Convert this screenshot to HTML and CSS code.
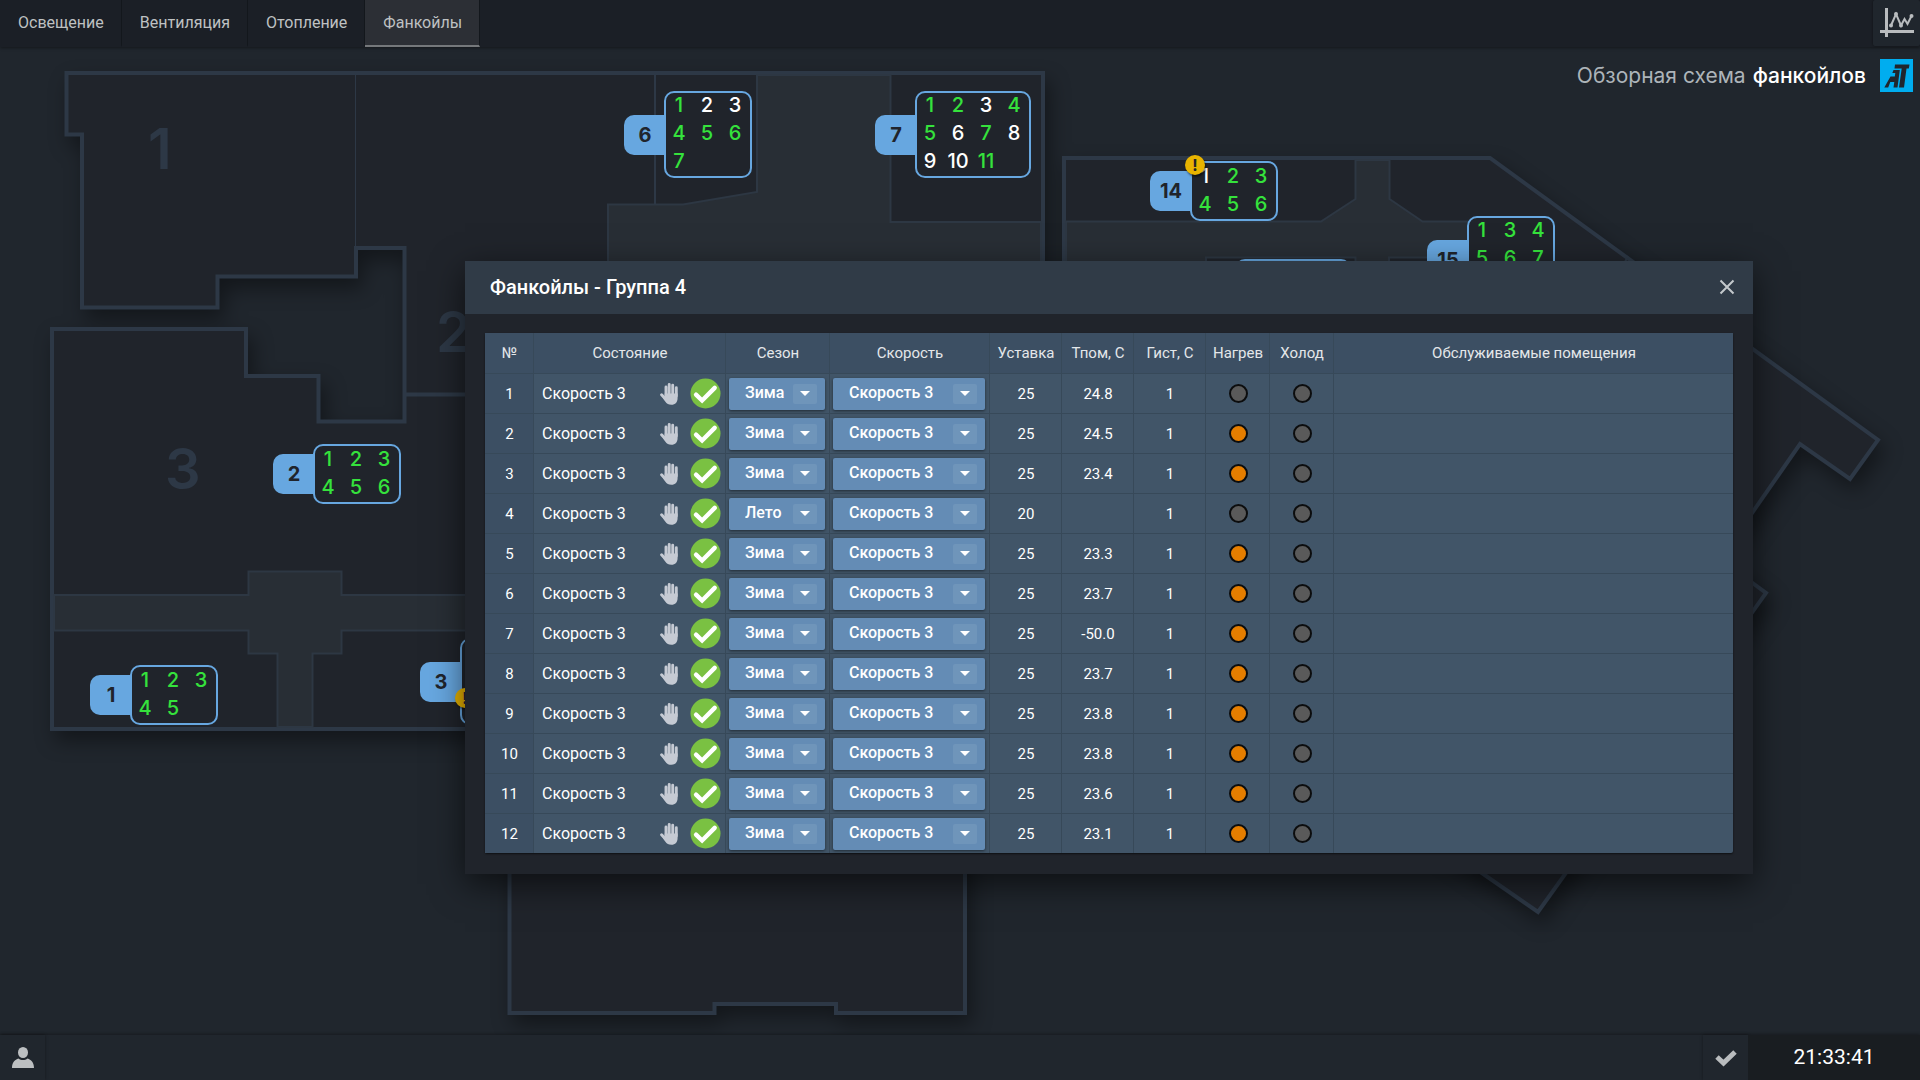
FILE: index.html
```html
<!DOCTYPE html>
<html lang="ru">
<head>
<meta charset="utf-8">
<title>Обзорная схема фанкойлов</title>
<link rel="stylesheet" href="styles.css">
</head>
<body>
<svg class="sprite" aria-hidden="true">
  <symbol id="hand" viewBox="0 0 18 22">
    <g fill="none" stroke="currentColor" stroke-linecap="round" stroke-width="2.9">
      <path d="M6 4V12M9.2 1.500V12M12.700 2.300V12M16.300 4.800V13M1.600 11.800L5.500 16"/>
    </g>
    <path fill="currentColor" d="M4.700 10.500h12.900v4.500c0 4-2.200 6.800-6.200 6.800-2.800 0-4.700-1-6.200-3.300L2.500 14.400l2.200-.7z"/>
  </symbol>
  <symbol id="ok" viewBox="0 0 32 32">
    <circle cx="16" cy="16" r="15.500" fill="#7ac142"/>
    <path d="M6.200 17.200l6.300 6 13-13" fill="none" stroke="#fff" stroke-width="4.500" stroke-linecap="round"/>
  </symbol>
</svg>

<header class="topbar">
  <nav class="tabs">
    <a class="tab" href="#light">Освещение</a>
    <a class="tab" href="#vent">Вентиляция</a>
    <a class="tab" href="#heat">Отопление</a>
    <a class="tab active" href="#fancoil">Фанкойлы</a>
  </nav>
  <button class="chart-btn" type="button" aria-label="Графики">
    <svg width="34" height="32" viewBox="0 0 34 32" fill="none" stroke="#b9bcbe">
      <path d="M6.500 1v29M0 24.500h34" stroke-width="3"/>
      <path d="M11 18.500l5-11.500 5 11.500 3.500-6.500 3 5 4-8" stroke-width="2"/>
      <g fill="#b9bcbe" stroke="none"><circle cx="11" cy="18.500" r="2"/><circle cx="16" cy="7" r="2"/><circle cx="21" cy="18.500" r="2"/><circle cx="31.500" cy="9" r="2"/></g>
    </svg>
  </button>
</header>

<main class="stage">
  <svg class="plan" width="1920" height="988" viewBox="0 47 1920 988" aria-hidden="true">
    <g class="walls">
      <path d="M66.500 73H1043V460H965V1013H836V1004H714.500V1013H509.500V729H52V329H246V376H318.500V421.500H404.500V248H356V276.500H217.500V307.500H82V134.500H66.500Z"/>
      <path d="M1064 158H1490L1878 440 1850 479 1800 444 1720 559 1766 593 1538 912 1300 747H1064Z"/>
    </g>
    <g class="halls">
      <path d="M608 460V204.500H683L757 192V75H890.500V222H1041V460Z"/>
      <path d="M54 595H248.500V571.500H341.500V595H600V630.500H341.500V653.500H312.500V727H277.500V653.500H248.500V630.500H54Z"/>
      <path d="M1066 221.500H1321L1355.500 199V160H1389.500V199L1422.500 221.500H1500V257.500H1389V600H1355.500V257.500H1206V600H1066Z"/>
    </g>
    <path class="thin" d="M355.500 75V248"/>
    <path class="mid" d="M655 75V204M1624 264L1628 256"/>
    <path class="wide" d="M404 394.500H480"/>
    <g class="zones">
      <text x="148" y="169">1</text>
      <text x="436" y="352">2</text>
      <text x="165" y="489">3</text>
    </g>
  </svg>

  <h1 class="title">Обзорная схема <b>фанкойлов</b>
    <svg width="33" height="33" viewBox="0 0 33 33" aria-hidden="true">
      <path fill="#00adef" d="M0 0h33v33H0z"/>
      <path fill="#20262d" d="M15 5.500h14.500l-.7 4H26.500L24 28.500h-5L21.700 9.500H14.500z"/>
      <path fill="#20262d" d="M13.500 11h6.300L17.500 28.500h-4l.8-5.500h-4L8.200 28.500H4.300L10.500 17.500h4.300l.5-3.500h-3z"/>
    </svg>
  </h1>

  <section class="marker m6"><span class="tag">6</span><span class="box"><i>1</i><i class="off">2</i><i class="off">3</i><i>4</i><i>5</i><i>6</i><i>7</i></span></section>
  <section class="marker m7"><span class="tag">7</span><span class="box four"><i>1</i><i>2</i><i class="off">3</i><i>4</i><i>5</i><i class="off">6</i><i>7</i><i class="off">8</i><i class="off">9</i><i class="off">10</i><i>11</i></span></section>
  <section class="marker m14"><span class="tag">14</span><span class="box short"><i class="off">1</i><i>2</i><i>3</i><i>4</i><i>5</i><i>6</i></span><span class="alert">!</span></section>
  <section class="marker m15"><span class="tag">15</span><span class="box tall"><i>1</i><i>3</i><i>4</i><i>5</i><i>6</i><i>7</i></span></section>
  <section class="marker m16"><span class="tag"></span><span class="box four tall"></span></section>
  <section class="marker m2"><span class="tag">2</span><span class="box short"><i>1</i><i>2</i><i>3</i><i>4</i><i>5</i><i>6</i></span></section>
  <section class="marker m1"><span class="tag">1</span><span class="box short"><i>1</i><i>2</i><i>3</i><i>4</i><i>5</i></span></section>
  <section class="marker m3"><span class="tag">3</span><span class="box tall"></span><span class="alert low">!</span></section>

  <section class="dialog" role="dialog" aria-labelledby="dlg-title">
    <header class="dialog-head">
      <h2 id="dlg-title">Фанкойлы - Группа 4</h2>
      <button class="close" type="button" aria-label="Закрыть">
        <svg width="16" height="16" viewBox="0 0 16 16" fill="none" stroke="#c3c8cc" stroke-width="2"><path d="M1.500 1.500l13 13M14.500 1.500l-13 13"/></svg>
      </button>
    </header>
    <div class="dialog-body">
      <table class="units">
        <colgroup><col class="c-num"><col class="c-state"><col class="c-season"><col class="c-speed"><col class="c-val"><col class="c-val"><col class="c-val"><col class="c-led"><col class="c-led"><col></colgroup>
        <thead>
          <tr><th>№</th><th>Состояние</th><th>Сезон</th><th>Скорость</th><th>Уставка</th><th>Тпом, С</th><th>Гист, С</th><th>Нагрев</th><th>Холод</th><th>Обслуживаемые помещения</th></tr>
        </thead>
        <tbody>
          <tr><td>1</td><td><div class="state"><span>Скорость 3</span><svg class="hand"><use href="#hand"/></svg><svg class="ok"><use href="#ok"/></svg></div></td><td><label class="pick"><select aria-label="Сезон 1"><option>Зима</option></select></label></td><td><label class="pick"><select aria-label="Скорость 1"><option>Скорость 3</option></select></label></td><td>25</td><td>24.8</td><td>1</td><td><span class="led"></span></td><td><span class="led"></span></td><td></td></tr>
          <tr><td>2</td><td><div class="state"><span>Скорость 3</span><svg class="hand"><use href="#hand"/></svg><svg class="ok"><use href="#ok"/></svg></div></td><td><label class="pick"><select aria-label="Сезон 2"><option>Зима</option></select></label></td><td><label class="pick"><select aria-label="Скорость 2"><option>Скорость 3</option></select></label></td><td>25</td><td>24.5</td><td>1</td><td><span class="led on"></span></td><td><span class="led"></span></td><td></td></tr>
          <tr><td>3</td><td><div class="state"><span>Скорость 3</span><svg class="hand"><use href="#hand"/></svg><svg class="ok"><use href="#ok"/></svg></div></td><td><label class="pick"><select aria-label="Сезон 3"><option>Зима</option></select></label></td><td><label class="pick"><select aria-label="Скорость 3"><option>Скорость 3</option></select></label></td><td>25</td><td>23.4</td><td>1</td><td><span class="led on"></span></td><td><span class="led"></span></td><td></td></tr>
          <tr><td>4</td><td><div class="state"><span>Скорость 3</span><svg class="hand"><use href="#hand"/></svg><svg class="ok"><use href="#ok"/></svg></div></td><td><label class="pick"><select aria-label="Сезон 4"><option>Лето</option></select></label></td><td><label class="pick"><select aria-label="Скорость 4"><option>Скорость 3</option></select></label></td><td>20</td><td></td><td>1</td><td><span class="led"></span></td><td><span class="led"></span></td><td></td></tr>
          <tr><td>5</td><td><div class="state"><span>Скорость 3</span><svg class="hand"><use href="#hand"/></svg><svg class="ok"><use href="#ok"/></svg></div></td><td><label class="pick"><select aria-label="Сезон 5"><option>Зима</option></select></label></td><td><label class="pick"><select aria-label="Скорость 5"><option>Скорость 3</option></select></label></td><td>25</td><td>23.3</td><td>1</td><td><span class="led on"></span></td><td><span class="led"></span></td><td></td></tr>
          <tr><td>6</td><td><div class="state"><span>Скорость 3</span><svg class="hand"><use href="#hand"/></svg><svg class="ok"><use href="#ok"/></svg></div></td><td><label class="pick"><select aria-label="Сезон 6"><option>Зима</option></select></label></td><td><label class="pick"><select aria-label="Скорость 6"><option>Скорость 3</option></select></label></td><td>25</td><td>23.7</td><td>1</td><td><span class="led on"></span></td><td><span class="led"></span></td><td></td></tr>
          <tr><td>7</td><td><div class="state"><span>Скорость 3</span><svg class="hand"><use href="#hand"/></svg><svg class="ok"><use href="#ok"/></svg></div></td><td><label class="pick"><select aria-label="Сезон 7"><option>Зима</option></select></label></td><td><label class="pick"><select aria-label="Скорость 7"><option>Скорость 3</option></select></label></td><td>25</td><td>-50.0</td><td>1</td><td><span class="led on"></span></td><td><span class="led"></span></td><td></td></tr>
          <tr><td>8</td><td><div class="state"><span>Скорость 3</span><svg class="hand"><use href="#hand"/></svg><svg class="ok"><use href="#ok"/></svg></div></td><td><label class="pick"><select aria-label="Сезон 8"><option>Зима</option></select></label></td><td><label class="pick"><select aria-label="Скорость 8"><option>Скорость 3</option></select></label></td><td>25</td><td>23.7</td><td>1</td><td><span class="led on"></span></td><td><span class="led"></span></td><td></td></tr>
          <tr><td>9</td><td><div class="state"><span>Скорость 3</span><svg class="hand"><use href="#hand"/></svg><svg class="ok"><use href="#ok"/></svg></div></td><td><label class="pick"><select aria-label="Сезон 9"><option>Зима</option></select></label></td><td><label class="pick"><select aria-label="Скорость 9"><option>Скорость 3</option></select></label></td><td>25</td><td>23.8</td><td>1</td><td><span class="led on"></span></td><td><span class="led"></span></td><td></td></tr>
          <tr><td>10</td><td><div class="state"><span>Скорость 3</span><svg class="hand"><use href="#hand"/></svg><svg class="ok"><use href="#ok"/></svg></div></td><td><label class="pick"><select aria-label="Сезон 10"><option>Зима</option></select></label></td><td><label class="pick"><select aria-label="Скорость 10"><option>Скорость 3</option></select></label></td><td>25</td><td>23.8</td><td>1</td><td><span class="led on"></span></td><td><span class="led"></span></td><td></td></tr>
          <tr><td>11</td><td><div class="state"><span>Скорость 3</span><svg class="hand"><use href="#hand"/></svg><svg class="ok"><use href="#ok"/></svg></div></td><td><label class="pick"><select aria-label="Сезон 11"><option>Зима</option></select></label></td><td><label class="pick"><select aria-label="Скорость 11"><option>Скорость 3</option></select></label></td><td>25</td><td>23.6</td><td>1</td><td><span class="led on"></span></td><td><span class="led"></span></td><td></td></tr>
          <tr><td>12</td><td><div class="state"><span>Скорость 3</span><svg class="hand"><use href="#hand"/></svg><svg class="ok"><use href="#ok"/></svg></div></td><td><label class="pick"><select aria-label="Сезон 12"><option>Зима</option></select></label></td><td><label class="pick"><select aria-label="Скорость 12"><option>Скорость 3</option></select></label></td><td>25</td><td>23.1</td><td>1</td><td><span class="led on"></span></td><td><span class="led"></span></td><td></td></tr>
        </tbody>
      </table>
    </div>
  </section>
</main>

<footer class="statusbar">
  <button class="status-btn" type="button" aria-label="Пользователь">
    <svg width="22" height="22" viewBox="0 0 22 22" fill="#bcbfc1"><ellipse cx="11" cy="5.500" rx="5" ry="5.500"/><path d="M0 21c0-5.500 3-8.500 6.500-9.500 2.500 2 6.500 2 9 0 3.500 1 6.500 4 6.500 9.500z"/></svg>
  </button>
  <button class="status-btn ack" type="button" aria-label="Квитировать">
    <svg width="22" height="18" viewBox="0 0 22 18" fill="none" stroke="#b9bcbe" stroke-width="5"><path d="M2 8l6.500 6L20 3"/></svg>
  </button>
  <time class="clock">21:33:41</time>
</footer>
</body>
</html>
```
FILE: styles.css
```css
* { box-sizing: border-box; }
body {
  margin: 0;
  min-height: 100vh;
  display: flex;
  flex-direction: column;
  background: #20262d;
  color: #fff;
  font-family: Roboto, sans-serif;
  font-size: 16px;
}
button { border: 0; padding: 0; background: none; font: inherit; color: inherit; cursor: pointer; }
.sprite { display: none; }

/* top bar */
.topbar {
  height: 47px;
  display: flex;
  justify-content: space-between;
  background: #1b1f26;
  box-shadow: 0 1px 3px rgba(0, 0, 0, .4);
  z-index: 1;
}
.tabs { display: flex; }
.tab {
  padding: 0 17px 0 18px;
  display: flex;
  align-items: center;
  border-right: 1px solid #13171c;
  border-bottom: 2px solid transparent;
  color: #bfc1c2;
  text-decoration: none;
}
.tab.active { background: #2c2f35; border-bottom-color: #75787b; }
.chart-btn {
  width: 47px;
  height: 46px;
  display: grid;
  place-items: center;
  background: #20262d;
  border-radius: 2px;
  box-shadow: 0 0 3px rgba(0, 0, 0, .5);
}

/* floor plan */
.stage { position: relative; flex: 1; display: grid; grid-template-columns: minmax(0, 1fr); overflow: hidden; }
.plan { grid-area: 1 / 1; display: block; }
.walls { fill: #20242b; stroke: #2d3846; stroke-width: 4; filter: drop-shadow(5px 10px 10px rgba(0, 0, 0, .4)); }
.halls { fill: #282e35; stroke: #2d3743; stroke-width: 2; }
.thin, .mid, .wide { fill: none; stroke: #2d3846; }
.thin { stroke-width: 1; }
.mid { stroke-width: 2; }
.wide { stroke-width: 4; }
.zones { fill: #2d3846; font: 600 56px Inter, sans-serif; }

.title {
  grid-area: 1 / 1;
  place-self: start end;
  margin: 12px 7px 0;
  display: flex;
  align-items: center;
  gap: 7px;
  font: 400 21px/32px Inter, sans-serif;
  color: #adb4b9;
}
.title b { color: #fff; font-weight: 500; }
.title svg { margin-left: 7px; }

.marker { position: absolute; display: flex; align-items: center; font: 500 20px/24px Inter, sans-serif; }
.tag {
  width: 40px;
  height: 40px;
  padding-left: 2px;
  border-radius: 10px 0 0 10px;
  background: #67a7e0;
  color: #20242b;
  font-weight: 700;
  line-height: 40px;
  text-align: center;
}
.box {
  padding: 0 3px 3px 1px;
  display: grid;
  grid-template-columns: repeat(3, 24px);
  grid-auto-rows: 24px;
  gap: 4px;
  border: 2px solid #67a7e0;
  border-radius: 10px;
  background: #20242b;
}
.box.four { grid-template-columns: repeat(4, 24px); }
.box.tall { min-height: 87px; }
.box.short { padding-top: 1px; }
.box i { font-style: normal; color: #35e23c; display: flex; justify-content: center; }
.box .off { color: #fff; }
.alert {
  position: absolute;
  left: 35px;
  top: -6px;
  width: 20px;
  height: 20px;
  border-radius: 50%;
  background: #e8b400;
  color: #20242b;
  font-size: 16px;
  font-weight: 700;
  line-height: 20px;
  text-align: center;
  box-shadow: 1px 2px 2px rgba(0, 0, 0, .5);
}
.alert.low { top: 50px; }
.m6 { left: 624px; top: 44px; }
.m7 { left: 875px; top: 44px; }
.m14 { left: 1150px; top: 114px; }
.m15 { left: 1427px; top: 169px; }
.m16 { left: 1195px; top: 212px; }
.m2 { left: 273px; top: 397px; }
.m1 { left: 90px; top: 618px; }
.m3 { left: 420px; top: 591px; }

/* dialog window */
.dialog {
  position: absolute;
  left: 465px;
  right: 167px;
  top: 214px;
  background: #20242b;
  box-shadow: 0 10px 32px rgba(0, 0, 0, .6);
}
.dialog-head {
  height: 53px;
  padding: 0 18px 2px 25px;
  display: flex;
  align-items: center;
  justify-content: space-between;
  background: #303b47;
}
.dialog-head h2 { margin: 0; font-size: 20px; font-weight: 500; }
.close { display: flex; }
.dialog-body { padding: 19px 20px 21px; }

.units { width: 100%; table-layout: fixed; border-spacing: 0; background: #415568; border-radius: 2px; box-shadow: 0 1px 2px rgba(0, 0, 0, .6); font-size: 15px; }
.c-num { width: 49px; }
.c-state { width: 192px; }
.c-season { width: 104px; }
.c-speed { width: 160px; }
.c-val { width: 72px; }
.c-led { width: 64px; }
.units th, .units td { height: 40px; padding: 0 0 0 1px; text-align: center; border-right: 1px solid #374959; white-space: nowrap; }
.units th { background: #3c4f63; color: #e4e7ea; font-weight: 400; }
.units td { border-top: 1px solid #374959; }
.units td:first-child { background: #3c4f63; }
.units th:last-child, .units td:last-child { border-right: 0; }
.state { padding: 0 4px 0 7px; display: flex; align-items: center; gap: 12px; font-size: 16px; }
.state span { flex: 1; text-align: left; }
.hand { width: 18px; height: 22px; color: #c5cad3; }
.ok { width: 31px; height: 31px; }
.pick { margin: 0 4px 0 2px; display: grid; align-items: center; }
.pick::before, .pick::after { content: ""; grid-area: 1 / 1; z-index: 1; justify-self: end; pointer-events: none; }
.pick::before { width: 24px; height: 20px; margin-right: 8px; border-radius: 2px; background: #6f95ba; }
.pick::after { width: 10px; height: 5px; margin-right: 15px; background: #fff; clip-path: polygon(0 0, 100% 0, 50% 100%); }
.pick select {
  grid-area: 1 / 1;
  appearance: none;
  width: 100%;
  height: 32px;
  padding: 0 0 2px 16px;
  border: 0;
  border-radius: 2px;
  background: #648cb5;
  color: #fff;
  font: 500 16px Roboto, sans-serif;
  box-shadow: 0 1px 3px rgba(0, 0, 0, .5);
}
.led { display: block; width: 19px; height: 19px; margin: 0 auto; border: 2px solid #0c0d0e; border-radius: 50%; background: #5a5a5a; }
.led.on { background: #e67e00; }

/* status bar */
.statusbar { height: 45px; display: flex; background: #20262d; box-shadow: 0 -1px 3px rgba(0, 0, 0, .3); z-index: 1; }
.status-btn { width: 45px; display: grid; place-items: center; box-shadow: 0 0 3px rgba(0, 0, 0, .4); }
.ack { margin-left: auto; }
.clock { width: 172px; background: #191d21; font-size: 21px; line-height: 45px; text-align: center; }
```
